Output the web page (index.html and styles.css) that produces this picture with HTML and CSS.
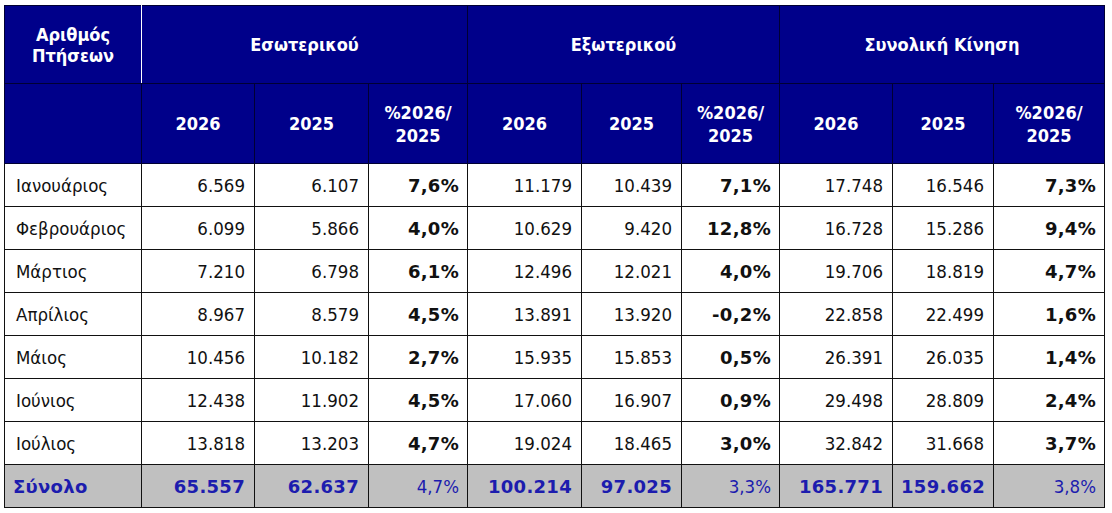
FILE: index.html
```html
<!DOCTYPE html>
<html lang="el">
<head>
<meta charset="utf-8">
<title>Αριθμός Πτήσεων</title>
<link rel="stylesheet" href="styles.css">
</head>
<body>
<div class="wrap">
<table class="flights">
  <colgroup>
    <col class="c-month">
    <col class="c-a"><col class="c-b"><col class="c-p">
    <col class="c-d"><col class="c-e"><col class="c-f">
    <col class="c-g"><col class="c-h"><col class="c-i">
  </colgroup>
  <thead>
    <tr class="h1">
      <th class="corner">Αριθμός<br>Πτήσεων</th>
      <th colspan="3" class="split">Εσωτερικού</th>
      <th colspan="3">Εξωτερικού</th>
      <th colspan="3">Συνολική Κίνηση</th>
    </tr>
    <tr class="h2">
      <th></th>
      <th>2026</th><th>2025</th><th>%2026/<br>2025</th>
      <th>2026</th><th>2025</th><th>%2026/<br>2025</th>
      <th>2026</th><th>2025</th><th>%2026/<br>2025</th>
    </tr>
  </thead>
  <tbody>
    <tr><td class="m">Ιανουάριος</td><td>6.569</td><td>6.107</td><td class="p">7,6%</td><td>11.179</td><td>10.439</td><td class="p">7,1%</td><td>17.748</td><td>16.546</td><td class="p">7,3%</td></tr>
    <tr><td class="m">Φεβρουάριος</td><td>6.099</td><td>5.866</td><td class="p">4,0%</td><td>10.629</td><td>9.420</td><td class="p">12,8%</td><td>16.728</td><td>15.286</td><td class="p">9,4%</td></tr>
    <tr><td class="m">Μάρτιος</td><td>7.210</td><td>6.798</td><td class="p">6,1%</td><td>12.496</td><td>12.021</td><td class="p">4,0%</td><td>19.706</td><td>18.819</td><td class="p">4,7%</td></tr>
    <tr><td class="m">Απρίλιος</td><td>8.967</td><td>8.579</td><td class="p">4,5%</td><td>13.891</td><td>13.920</td><td class="p">-0,2%</td><td>22.858</td><td>22.499</td><td class="p">1,6%</td></tr>
    <tr><td class="m">Μάιος</td><td>10.456</td><td>10.182</td><td class="p">2,7%</td><td>15.935</td><td>15.853</td><td class="p">0,5%</td><td>26.391</td><td>26.035</td><td class="p">1,4%</td></tr>
    <tr><td class="m">Ιούνιος</td><td>12.438</td><td>11.902</td><td class="p">4,5%</td><td>17.060</td><td>16.907</td><td class="p">0,9%</td><td>29.498</td><td>28.809</td><td class="p">2,4%</td></tr>
    <tr><td class="m">Ιούλιος</td><td>13.818</td><td>13.203</td><td class="p">4,7%</td><td>19.024</td><td>18.465</td><td class="p">3,0%</td><td>32.842</td><td>31.668</td><td class="p">3,7%</td></tr>
    <tr class="total"><td class="m">Σύνολο</td><td>65.557</td><td>62.637</td><td class="p">4,7%</td><td>100.214</td><td>97.025</td><td class="p">3,3%</td><td>165.771</td><td>159.662</td><td class="p">3,8%</td></tr>
  </tbody>
</table>
</div>
</body>
</html>
```

FILE: styles.css
```css
html, body {
  margin: 0;
  padding: 0;
  background: #ffffff;
}

.wrap {
  padding: 5px 0 0 4px;
}

.flights {
  border-collapse: collapse;
  table-layout: fixed;
  width: 1101px;
  font-family: "DejaVu Sans Condensed", "DejaVu Sans", sans-serif;
  font-stretch: condensed;
  font-size: 18.5px;
  color: #111111;
}

.c-month { width: 137px; }
.c-a { width: 113px; }
.c-b { width: 114px; }
.c-p { width: 99px; }
.c-d { width: 114px; }
.c-e { width: 100px; }
.c-f { width: 98px; }
.c-g { width: 113px; }
.c-h { width: 101px; }
.c-i { width: 111px; }

.flights th {
  background: #00008a;
  color: #ffffff;
  font-weight: bold;
  font-size: 18px;
  text-align: center;
  vertical-align: middle;
  border: 1px solid #000033;
  line-height: 21px;
  padding: 0;
}

.h1 th { height: 77px; }
.h2 th { height: 79px; }

.h2 th { line-height: 23px; }

.flights th.corner {
  border-right: 1px solid #ffffff;
}

.flights td {
  border: 1px solid #111111;
  text-align: right;
  vertical-align: middle;
  height: 42px;
  padding: 0 9px 0 8px;
  white-space: nowrap;
}

.flights td.m {
  text-align: left;
  padding-left: 11px;
}

.flights td.p,
.total td {
  font-family: "DejaVu Sans", sans-serif;
  font-stretch: normal;
  font-weight: bold;
  font-size: 18px;
  letter-spacing: 0.3px;
}

.flights td.p {
  padding-right: 8px;
}

.total td {
  background: #c0c0c0;
  color: #1c1cae;
}

.total td.m {
  padding-left: 8px;
}

.total td.p {
  font-family: "DejaVu Sans Condensed", "DejaVu Sans", sans-serif;
  font-stretch: condensed;
  font-weight: normal;
  font-size: 18.5px;
  letter-spacing: 0;
}
```
